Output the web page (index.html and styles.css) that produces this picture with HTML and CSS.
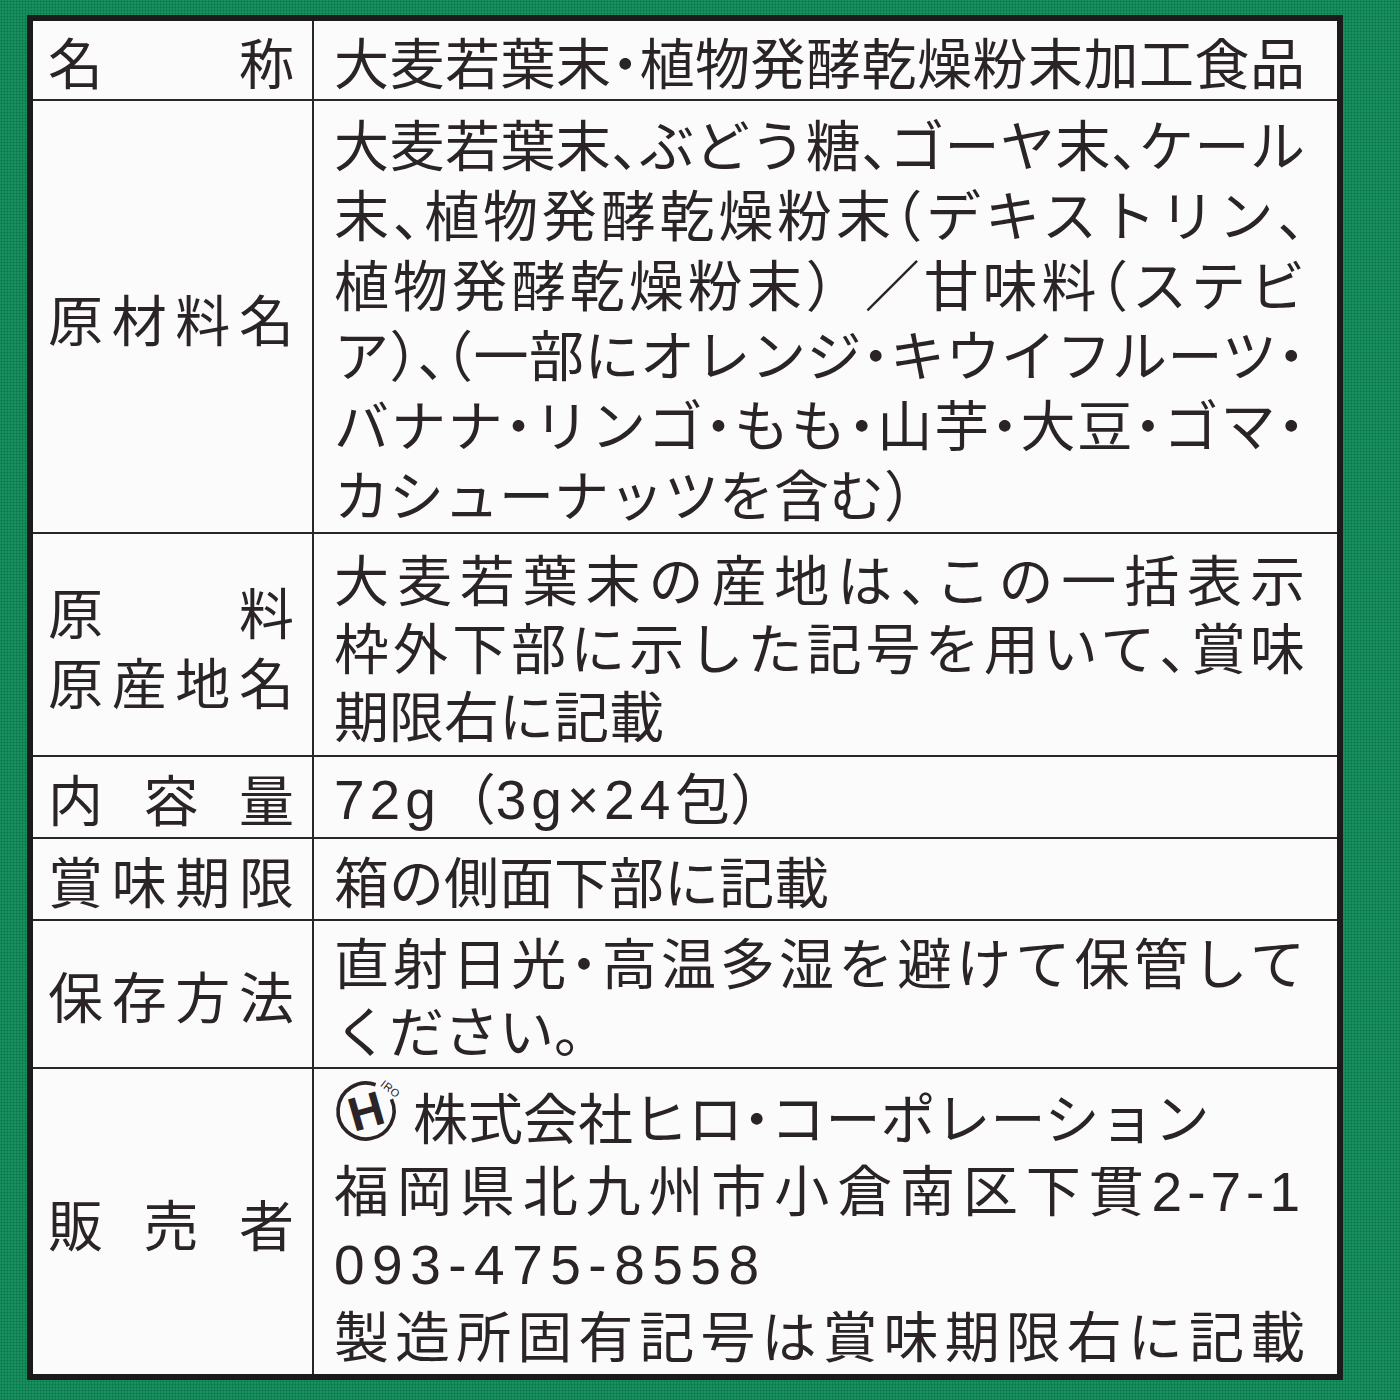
FILE: index.html
```html
<!DOCTYPE html>
<html lang="ja">
<head>
<meta charset="utf-8">
<title>一括表示</title>
<link rel="stylesheet" href="styles.css">
</head>
<body>
<div class="page">
  <div class="label-table">
    <div class="th r1"><div class="lbl">名称</div></div>
    <div class="td r1"><div class="ln j">大麦若葉末<span class="h">・</span>植物発酵乾燥粉末加工食品</div></div>

    <div class="th r2"><div class="lbl">原材料名</div></div>
    <div class="td r2 tall">
      <div class="ln j">大麦若葉末<span class="h">、</span>ぶどう糖<span class="h">、</span>ゴーヤ末<span class="h">、</span>ケール</div>
      <div class="ln j">末<span class="h">、</span>植物発酵乾燥粉末<span class="h">（</span>デキストリン<span class="h">、</span></div>
      <div class="ln j">植物発酵乾燥粉末）／甘味料<span class="h">（</span>ステビ</div>
      <div class="ln j">ア<span class="h">）、（</span>一部にオレンジ<span class="h">・</span>キウイフルーツ<span class="h">・</span></div>
      <div class="ln j">バナナ<span class="h">・</span>リンゴ<span class="h">・</span>もも<span class="h">・</span>山芋<span class="h">・</span>大豆<span class="h">・</span>ゴマ<span class="h">・</span></div>
      <div class="ln">カシューナッツを含む<span class="h">）</span></div>
    </div>

    <div class="th r3"><div class="lbl">原料</div><div class="lbl">原産地名</div></div>
    <div class="td r3">
      <div class="ln j">大麦若葉末の産地は<span class="h">、</span>この一括表示</div>
      <div class="ln j">枠外下部に示した記号を用いて<span class="h">、</span>賞味</div>
      <div class="ln">期限右に記載</div>
    </div>

    <div class="th r4"><div class="lbl">内容量</div></div>
    <div class="td r4"><div class="ln"><span class="n">72g</span>（<span class="n">3g×24</span>包）</div></div>

    <div class="th r5"><div class="lbl">賞味期限</div></div>
    <div class="td r5"><div class="ln">箱の側面下部に記載</div></div>

    <div class="th r6"><div class="lbl">保存方法</div></div>
    <div class="td r6">
      <div class="ln j">直射日光<span class="h">・</span>高温多湿を避けて保管して</div>
      <div class="ln">ください。</div>
    </div>

    <div class="th r7 last"><div class="lbl">販売者</div></div>
    <div class="td r7 last">
      <div class="ln logo-line">
        <svg class="logo" width="70" height="66" viewBox="0 0 70 66" aria-label="HIRO">
          <path d="M57.4 22.2 A28 28 0 1 1 41.6 7.7" fill="none" stroke="#2b2427" stroke-width="3.6" stroke-linecap="butt"/>
          <text x="32" y="51" text-anchor="middle" class="logo-h" transform="rotate(-16 32 34)">H</text>
          <text x="46" y="12" class="logo-iro" transform="rotate(38 51 10)">IRO</text>
        </svg>
        <span>株式会社ヒロ<span class="h">・</span>コーポレーション</span>
      </div>
      <div class="ln j">福岡県北九州市小倉南区下貫<span class="n">2-7-1</span></div>
      <div class="ln"><span class="n tel">093-475-8558</span></div>
      <div class="ln j">製造所固有記号は賞味期限右に記載</div>
    </div>
  </div>
</div>
</body>
</html>
```

FILE: styles.css
```css
html, body {
  margin: 0;
  padding: 0;
}

body {
  width: 1400px;
  height: 1400px;
  overflow: hidden;
  background-color: #128a5a;
  background-image:
    radial-gradient(circle, rgba(0, 50, 25, 0.28) 0.7px, transparent 1.2px),
    radial-gradient(circle, rgba(90, 200, 150, 0.18) 0.7px, transparent 1.2px);
  background-size: 3px 3px, 3px 3px;
  background-position: 0 0, 1.5px 1.5px;
  font-family: "Noto Sans CJK JP", "Noto Sans", sans-serif;
  color: #2b2427;
  text-spacing-trim: space-all;
}

.page {
  padding: 15px 0 0 27px;
}

.label-table {
  width: 1316px;
  box-sizing: border-box;
  border: 6px solid #1d1a1c;
  background: #fbfbfb;
  display: grid;
  grid-template-columns: 281px 1fr;
  grid-template-rows: 80px 433px 223px 82px 82px 148px 305px;
}

.th, .td {
  box-sizing: border-box;
  border-bottom: 2px solid #2a2528;
  display: flex;
  flex-direction: column;
  justify-content: center;
  font-size: 55px;
  line-height: 68px;
}

.th {
  border-right: 2px solid #2a2528;
  padding: 0 18px 0 15px;
}

.td {
  padding: 0 32px 0 20px;
}

.last {
  border-bottom: none;
}

.tall {
  line-height: 70px;
}

.r3 .lbl {
  line-height: 70px;
}

.lbl {
  text-align: justify;
  text-align-last: justify;
}

.ln {
  white-space: nowrap;
}

.ln.j {
  text-align: justify;
  text-align-last: justify;
}

.h {
  font-feature-settings: "halt";
}

.n {
  font-family: "Liberation Sans", "Noto Sans", sans-serif;
  letter-spacing: 5px;
}

.n.tel {
  letter-spacing: 7.5px;
}

.logo-line {
  display: flex;
  align-items: center;
}

.logo {
  flex: none;
  width: 70px;
  height: 66px;
  margin-right: 9px;
  margin-bottom: 10px;
}

.logo-h {
  font-family: "Liberation Sans", sans-serif;
  font-weight: bold;
  font-size: 48px;
  fill: #2b2427;
}

.logo-iro {
  font-family: "Liberation Sans", sans-serif;
  font-size: 11px;
  fill: #2b2427;
  letter-spacing: 0.5px;
}
```
